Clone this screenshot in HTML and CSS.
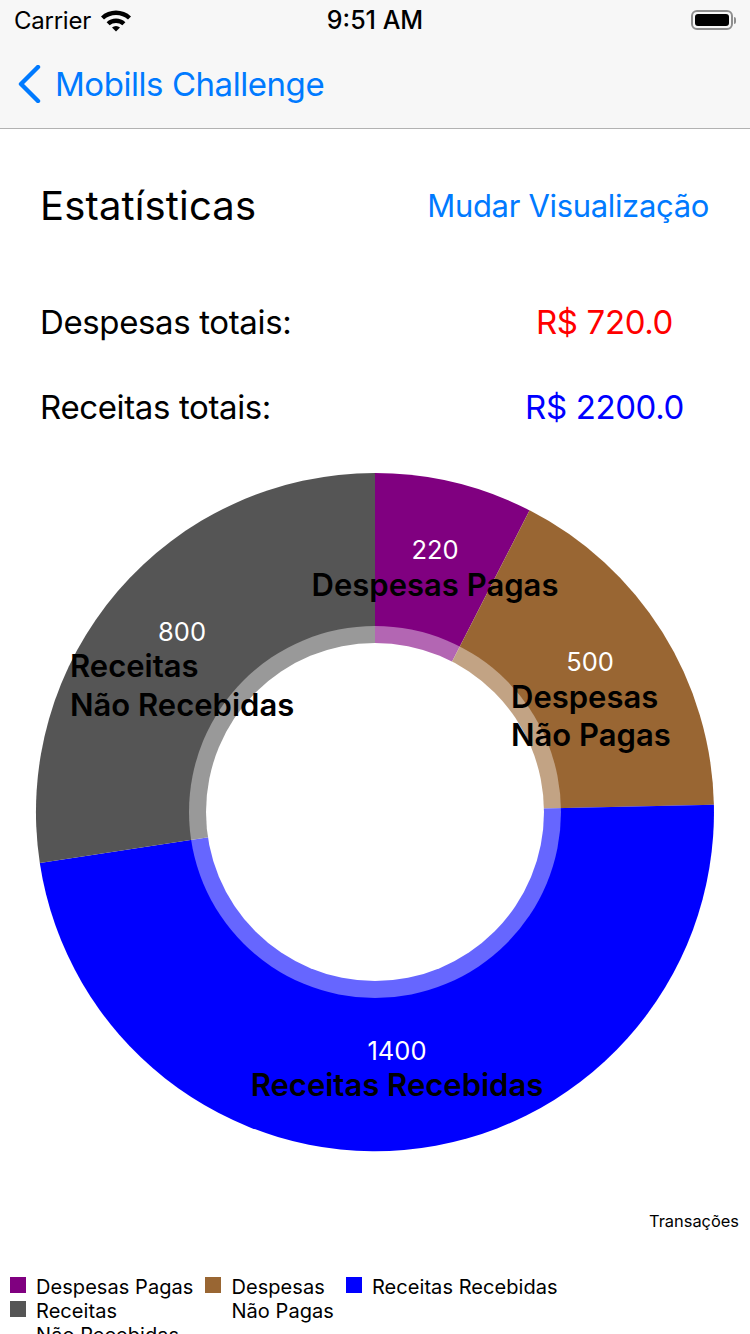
FILE: index.html
```html
<!DOCTYPE html>
<html lang="en">
<head>
<meta charset="UTF-8">
<meta name="viewport" content="width=device-width, initial-scale=1.0">
<title>Mobills Challenge</title>
<link rel="stylesheet" href="styles.css">
</head>
<body>
<header class="top">
    <div class="status">
        <div class="status-left">
            <span>Carrier</span>
            <svg class="wifi" width="32" height="24" viewBox="0 0 32 24">
                <path d="M1 8.5 A22 22 0 0 1 31 8.5 L28 11.6 A18 18 0 0 0 4 11.6 Z"/>
                <path d="M6.6 14.2 A14 14 0 0 1 25.4 14.2 L22.4 17.2 A10 10 0 0 0 9.6 17.2 Z"/>
                <path d="M12 19.6 A6 6 0 0 1 20 19.6 L16 23.6 Z"/>
            </svg>
        </div>
        <div class="status-time">9:51 AM</div>
        <div class="status-right">
            <div class="battery"><div class="battery-fill"></div></div>
            <div class="battery-cap"></div>
        </div>
    </div>
    <nav class="nav">
        <svg class="back" width="24" height="38" viewBox="0 0 24 38">
            <path d="M21 2 L4 19 L21 36" fill="none" stroke="#007aff" stroke-width="4.4" stroke-linecap="round" stroke-linejoin="round"/>
        </svg>
        <span>Mobills Challenge</span>
    </nav>
</header>

<main class="content">
    <div class="title-row">
        <h1>Estatísticas</h1>
        <a class="switch">Mudar Visualização</a>
    </div>
    <div class="total-row first">
        <span>Despesas totais:</span>
        <span class="value red">R$ 720.0</span>
    </div>
    <div class="total-row second">
        <span>Receitas totais:</span>
        <span class="value blue">R$ 2200.0</span>
    </div>

    <svg class="chart" width="750" height="720" viewBox="0 450 750 720">
        <path d="M375 812 L375 473 A339 339 0 0 1 529.6 510.3 Z" fill="#800080"/>
        <path d="M375 812 L529.6 510.3 A339 339 0 0 1 713.9 804.7 Z" fill="#996633"/>
        <path d="M375 812 L713.9 804.7 A339 339 0 0 1 39.8 862.9 Z" fill="#0000ff"/>
        <path d="M375 812 L39.8 862.9 A339 339 0 0 1 375 473 Z" fill="#555555"/>
        <circle cx="375" cy="812" r="186" fill="#ffffff" fill-opacity="0.4"/>
        <circle cx="375" cy="812" r="169" fill="#ffffff"/>

        <text class="num" x="435" y="559">220</text>
        <text class="lbl" x="435" y="596">Despesas Pagas</text>
        <text class="num" x="590" y="671">500</text>
        <text class="lbl start" x="511" y="708">Despesas</text>
        <text class="lbl start" x="511" y="746">Não Pagas</text>
        <text class="num" x="397" y="1060">1400</text>
        <text class="lbl" x="397" y="1096">Receitas Recebidas</text>
        <text class="num" x="182" y="641">800</text>
        <text class="lbl start" x="70" y="677">Receitas</text>
        <text class="lbl start" x="70" y="716">Não Recebidas</text>
    </svg>

    <div class="caption">Transações</div>

    <div class="legend">
        <div class="legend-col">
            <div class="legend-item"><i class="swatch purple"></i><span>Despesas Pagas</span></div>
            <div class="legend-item"><i class="swatch gray"></i><span>Receitas<br>Não Recebidas</span></div>
        </div>
        <div class="legend-col">
            <div class="legend-item"><i class="swatch brown"></i><span>Despesas<br>Não Pagas</span></div>
        </div>
        <div class="legend-col">
            <div class="legend-item"><i class="swatch blue-bg"></i><span>Receitas Recebidas</span></div>
        </div>
    </div>
</main>
</body>
</html>
```

FILE: styles.css
```css
html, body {
    margin: 0;
    height: 1334px;
    overflow: hidden;
    background: #fff;
}
body {
    font-family: Inter, "Liberation Sans", sans-serif;
    color: #000;
}
.top {
    height: 128px;
    background: #f7f7f7;
    border-bottom: 1px solid #b2b2b2;
}
.status {
    height: 40px;
    display: grid;
    grid-template-columns: 1fr auto 1fr;
    align-items: center;
    padding: 0 14px;
    font-size: 24px;
}
.status-left {
    display: flex;
    align-items: center;
    gap: 9px;
    letter-spacing: -0.25px;
}
.wifi {
    fill: #000;
}
.status-time {
    font-size: 25px;
    font-weight: 500;
}
.status-right {
    display: flex;
    justify-content: flex-end;
    align-items: center;
    gap: 1px;
}
.battery {
    width: 42px;
    height: 20px;
    box-sizing: border-box;
    border: 2px solid #8e8e8e;
    border-radius: 6px;
    padding: 2px;
}
.battery-fill {
    height: 100%;
    background: #000;
    border-radius: 3px;
}
.battery-cap {
    width: 2px;
    height: 7px;
    background: #8e8e8e;
    border-radius: 0 2px 2px 0;
}
.nav {
    height: 88px;
    display: flex;
    align-items: center;
    gap: 14px;
    padding-left: 17px;
    font-size: 33px;
    letter-spacing: -0.45px;
    color: #007aff;
}
.title-row {
    display: flex;
    justify-content: space-between;
    align-items: center;
    padding: 49px 41px 0 40px;
    height: 54px;
}
h1 {
    margin: 0;
    font-size: 40px;
    font-weight: 400;
    letter-spacing: 0.15px;
}
.switch {
    font-size: 31px;
    letter-spacing: -0.33px;
    color: #007aff;
}
.total-row {
    display: grid;
    grid-template-columns: 1fr 291px;
    align-items: center;
    padding-left: 40px;
    font-size: 33px;
    letter-spacing: -0.37px;
    height: 40px;
}
.total-row.first {
    margin-top: 70px;
}
.total-row.second {
    margin-top: 45px;
}
.value {
    text-align: center;
}
.red {
    color: #ff0000;
}
.blue {
    color: #0000ff;
}
.chart {
    display: block;
    margin-top: 23px;
}
.num {
    font-size: 25.5px;
    fill: #fff;
    text-anchor: middle;
}
.lbl {
    font-size: 31px;
    font-weight: 600;
    fill: #000;
    text-anchor: middle;
}
.lbl.start {
    text-anchor: start;
}
.caption {
    text-align: right;
    font-size: 16.4px;
    padding-right: 11px;
    margin-top: 41px;
}
.legend {
    display: flex;
    column-gap: 12px;
    padding-left: 10px;
    margin-top: 44px;
    font-size: 20px;
    letter-spacing: 0.06px;
    line-height: 24px;
}
.legend-item {
    display: flex;
    gap: 10px;
}
.swatch {
    width: 16px;
    height: 16px;
    margin-top: 2px;
}
.purple {
    background: #800080;
}
.brown {
    background: #996633;
}
.blue-bg {
    background: #0000ff;
}
.gray {
    background: #555555;
}
```
